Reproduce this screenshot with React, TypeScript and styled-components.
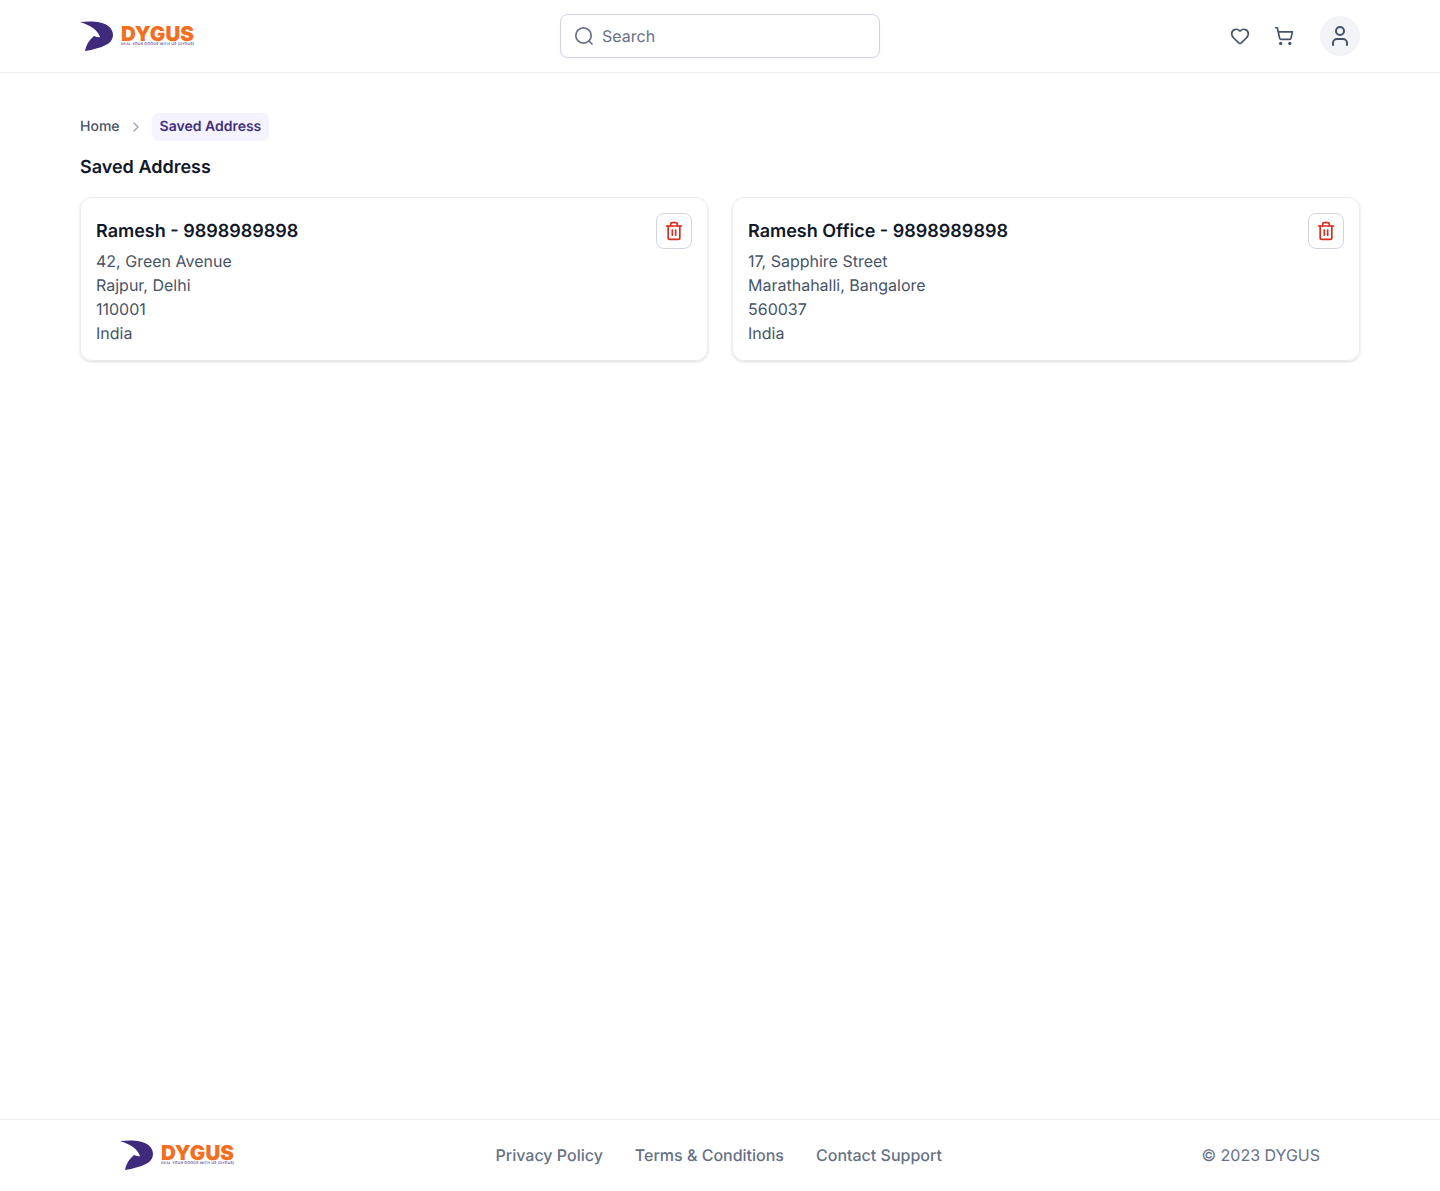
import { Heart, ShoppingCart, User, ChevronRight, Trash2 } from "lucide-react";
import styled, { createGlobalStyle } from "styled-components";

type Address = {
  title: string;
  lines: string[];
};

const addresses: Address[] = [
  {
    title: "Ramesh - 9898989898",
    lines: ["42, Green Avenue", "Rajpur, Delhi", "110001", "India"],
  },
  {
    title: "Ramesh Office - 9898989898",
    lines: ["17, Sapphire Street", "Marathahalli, Bangalore", "560037", "India"],
  },
];

const GlobalStyle = createGlobalStyle`
  * {
    box-sizing: border-box;
  }
  body {
    margin: 0;
    background: #fff;
    font-family: Inter, "Noto Sans", sans-serif;
    text-rendering: geometricPrecision;
  }
`;

const Page = styled.div`
  display: flex;
  flex-direction: column;
  min-height: 100vh;
`;

const Header = styled.header`
  display: grid;
  grid-template-columns: 1fr 320px 1fr;
  align-items: center;
  height: 73px;
  padding: 0 80px 1px;
  border-bottom: 1px solid #eaecf0;
`;

const LogoWrap = styled.div`
  display: flex;
  align-items: center;
  gap: 8px;
  width: 116px;
  height: 30px;
`;

const LogoText = styled.div`
  display: flex;
  flex-direction: column;
  width: 75px;
  color: #f26f21;
`;

const LogoName = styled.span`
  font-size: 20.5px;
  line-height: 17px;
  font-weight: 900;
  letter-spacing: 0.1px;
`;

const LogoTagline = styled.span`
  font-size: 3.6px;
  line-height: 5px;
  font-weight: 500;
  letter-spacing: 0.2px;
  color: #3f2a7c;
  white-space: nowrap;
`;

const SearchBox = styled.label`
  display: flex;
  align-items: center;
  gap: 8px;
  height: 44px;
  padding: 0 13px;
  border: 1px solid #d0d5dd;
  border-radius: 8px;
  box-shadow: 0 1px 2px rgba(16, 24, 40, 0.05);
  color: #667085;
  font-size: 16px;
  line-height: 24px;
`;

const HeaderActions = styled.div`
  display: flex;
  align-items: center;
  justify-content: flex-end;
  gap: 12px;
`;

const IconButton = styled.div`
  display: flex;
  align-items: center;
  justify-content: center;
  width: 32px;
  height: 32px;
  color: #475467;
`;

const Avatar = styled.div`
  display: flex;
  align-items: center;
  justify-content: center;
  width: 40px;
  height: 40px;
  margin-left: 8px;
  border-radius: 50%;
  background: #f2f4f7;
  color: #475467;
`;

const Main = styled.main`
  flex: 1;
  padding: 40px 80px;
`;

const Breadcrumbs = styled.nav`
  display: flex;
  align-items: center;
  gap: 8px;
  height: 28px;
  font-size: 14px;
  line-height: 20px;
  font-weight: 500;
  color: #475467;
`;

const CrumbSeparator = styled.span`
  display: flex;
  color: #98a2b3;
`;

const CurrentCrumb = styled.span`
  padding: 4px 8px;
  border-radius: 6px;
  background: #f4f3ff;
  color: #42307d;
  font-weight: 600;
`;

const Title = styled.h1`
  margin: 13px 0 15px;
  font-size: 18px;
  line-height: 28px;
  font-weight: 600;
  color: #101828;
`;

const CardGrid = styled.div`
  display: grid;
  grid-template-columns: 1fr 1fr;
  gap: 24px;
`;

const Card = styled.article`
  display: flex;
  justify-content: space-between;
  align-items: flex-start;
  height: 164px;
  padding: 15px;
  border: 1px solid #eaecf0;
  border-radius: 12px;
  box-shadow: 0 1px 3px rgba(16, 24, 40, 0.1), 0 1px 2px rgba(16, 24, 40, 0.06);
`;

const CardBody = styled.div`
  display: flex;
  flex-direction: column;
  padding-top: 5px;
`;

const CardTitle = styled.h2`
  margin: 0 0 3px;
  font-size: 18px;
  line-height: 28px;
  font-weight: 600;
  color: #101828;
`;

const AddressLine = styled.span`
  font-size: 16px;
  line-height: 24px;
  color: #475467;
`;

const DeleteButton = styled.button`
  display: flex;
  align-items: center;
  justify-content: center;
  width: 36px;
  height: 36px;
  padding: 0;
  border: 1px solid #d0d5dd;
  border-radius: 8px;
  background: #fff;
  color: #d92d20;
`;

const Footer = styled.footer`
  display: flex;
  align-items: center;
  justify-content: space-between;
  height: 72px;
  padding: 0 120px 1px;
  border-top: 1px solid #eaecf0;
  font-size: 16px;
  line-height: 24px;
  color: #667085;
`;

const FooterLinks = styled.nav`
  display: flex;
  gap: 32px;
  font-weight: 500;
  color: #667085;
`;

const Logo = () => (
  <LogoWrap>
    <svg width="33" height="30" viewBox="0 0 33 30">
      <path
        d="M0 1C6 .5 14 0 20 1.5 28 3 33 8 33 14c0 7-7 11-15 13-5 1.500-9 2.500-13 3 1-6 4-11 9-15 2 1 4 1.500 6 1C18 9 10 4 0 1Z"
        fill="#3f2a7c"
      />
    </svg>
    <LogoText>
      <LogoName>DYGUS</LogoName>
      <LogoTagline>DEAL YOUR GOODS WITH US (DYGUS)</LogoTagline>
    </LogoText>
  </LogoWrap>
);

const SearchIcon = () => (
  <svg width="20" height="20" viewBox="0 0 20 20" fill="none" stroke="currentColor" strokeWidth="1.67" strokeLinecap="round">
    <circle cx="9.5" cy="9.500" r="7.700" />
    <path d="m15.500 15.500 2.500 2.500" />
  </svg>
);

export default function App() {
  return (
    <Page>
      <GlobalStyle />
      <Header>
        <Logo />
        <SearchBox>
          <SearchIcon />
          Search
        </SearchBox>
        <HeaderActions>
          <IconButton>
            <Heart size={20} />
          </IconButton>
          <IconButton>
            <ShoppingCart size={20} />
          </IconButton>
          <Avatar>
            <User size={24} />
          </Avatar>
        </HeaderActions>
      </Header>
      <Main>
        <Breadcrumbs>
          <span>Home</span>
          <CrumbSeparator>
            <ChevronRight size={16} />
          </CrumbSeparator>
          <CurrentCrumb>Saved Address</CurrentCrumb>
        </Breadcrumbs>
        <Title>Saved Address</Title>
        <CardGrid>
          {addresses.map((address) => (
            <Card key={address.title}>
              <CardBody>
                <CardTitle>{address.title}</CardTitle>
                {address.lines.map((line) => (
                  <AddressLine key={line}>{line}</AddressLine>
                ))}
              </CardBody>
              <DeleteButton aria-label="Delete address">
                <Trash2 size={20} />
              </DeleteButton>
            </Card>
          ))}
        </CardGrid>
      </Main>
      <Footer>
        <Logo />
        <FooterLinks>
          <span>Privacy Policy</span>
          <span>Terms &amp; Conditions</span>
          <span>Contact Support</span>
        </FooterLinks>
        <span>© 2023 DYGUS</span>
      </Footer>
    </Page>
  );
}
